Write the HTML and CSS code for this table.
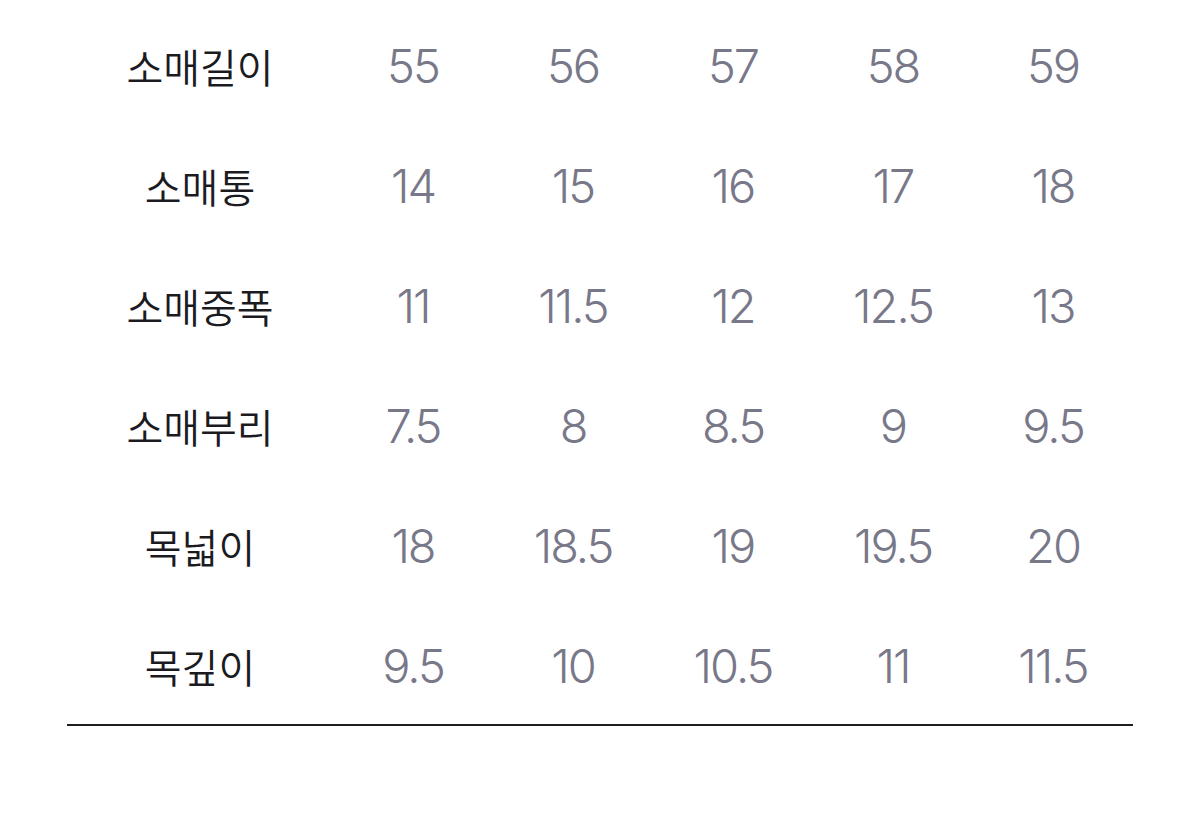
FILE: index.html
```html
<!DOCTYPE html>
<html lang="ko">
<head>
<meta charset="utf-8">
<link rel="stylesheet" href="styles.css">
</head>
<body>
<div class="table">
  <div class="row"><div class="label">소매길이</div><div class="val">55</div><div class="val">56</div><div class="val">57</div><div class="val">58</div><div class="val">59</div></div>
  <div class="row"><div class="label">소매통</div><div class="val">14</div><div class="val">15</div><div class="val">16</div><div class="val">17</div><div class="val">18</div></div>
  <div class="row"><div class="label">소매중폭</div><div class="val">11</div><div class="val">11.5</div><div class="val">12</div><div class="val">12.5</div><div class="val">13</div></div>
  <div class="row"><div class="label">소매부리</div><div class="val">7.5</div><div class="val">8</div><div class="val">8.5</div><div class="val">9</div><div class="val">9.5</div></div>
  <div class="row"><div class="label">목넓이</div><div class="val">18</div><div class="val">18.5</div><div class="val">19</div><div class="val">19.5</div><div class="val">20</div></div>
  <div class="row"><div class="label">목깊이</div><div class="val">9.5</div><div class="val">10</div><div class="val">10.5</div><div class="val">11</div><div class="val">11.5</div></div>
</div>
</body>
</html>
```

FILE: styles.css
```css
html, body {
  margin: 0;
  padding: 0;
  background: #ffffff;
}
body {
  width: 1200px;
  height: 826px;
  overflow: hidden;
}
.table {
  margin: 6px 0 0 67px;
  width: 1066px;
  border-bottom: 2px solid #1e1e1e;
}
.row {
  display: grid;
  grid-template-columns: 266px repeat(5, 160px);
  height: 120px;
  align-items: center;
}
.row:last-child {
  margin-bottom: -2px;
}
.label {
  text-align: center;
  font-family: "Noto Sans CJK KR", "Noto Sans", sans-serif;
  font-size: 40px;
  font-weight: 350;
  color: #1b1b1f;
  line-height: 1;
}
.val {
  text-align: center;
  font-family: Inter, "Noto Sans", sans-serif;
  font-size: 47px;
  font-weight: 300;
  color: #787889;
  line-height: 1;
  letter-spacing: -2px;
  padding-bottom: 2px;
}
```
